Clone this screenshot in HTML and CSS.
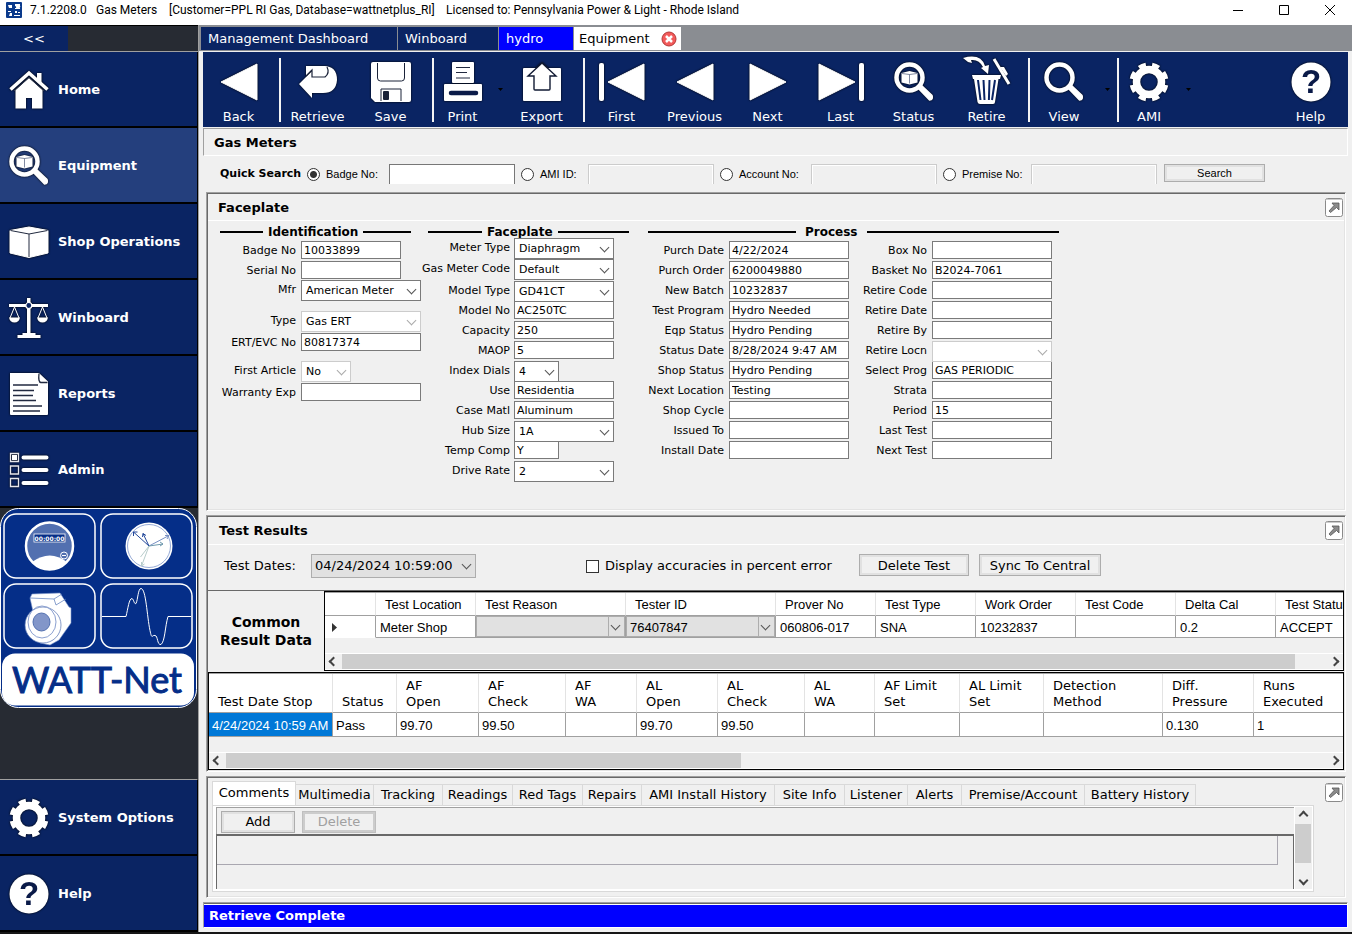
FILE: index.html
```html
<!DOCTYPE html>
<html lang="en">
<head>
<meta charset="utf-8">
<title>Gas Meters</title>
<link rel="stylesheet" href="styles.css">
</head>
<body>
<svg class="defs" aria-hidden="true">
  <symbol id="i-search" viewBox="0 0 40 40"><circle cx="15.500" cy="15.500" r="13" fill="none" stroke="#fff" stroke-width="4.500"/><path d="M24 26l3-3 11 10.500q1.500 4-2.500 4.500z" fill="#fff" stroke="#fff" stroke-width="1.500"/></symbol>
  <symbol id="i-box-search" viewBox="0 0 40 40"><use href="#i-search"/><path d="M7.500 11l8-2 8 2v9.500l-8 2-8-2z" fill="#fff"/><path d="M8 11.500l7.500 1 7.500-1M15.500 12.500v9" fill="none" stroke="#4a5878" stroke-width=".7"/></symbol>
  <symbol id="i-gear" viewBox="0 0 40 40"><circle cx="20" cy="20" r="12.500" fill="none" stroke="#fff" stroke-width="7.500"/><circle cx="20" cy="20" r="17" fill="none" stroke="#fff" stroke-width="5" pathLength="80" stroke-dasharray="5.400 4.600" transform="rotate(10.300 20 20)"/></symbol>
  <symbol id="i-help" viewBox="0 0 40 40"><circle cx="20" cy="20" r="19.500" fill="#fff"/><text x="20" y="31" text-anchor="middle" class="qmark">?</text></symbol>
  <symbol id="i-expand" viewBox="0 0 18 19"><rect x=".5" y=".5" width="17" height="18" rx="2" fill="#fff" stroke="#8a8a8a"/><path d="M1.500 1.500h15" stroke="#ccc"/><path d="M7 5h7v7l-2.500-2.500-6 5-1.500-1.500 5-5.500z" fill="#8b8b8b" stroke="#555" stroke-width=".8"/></symbol>
  <symbol id="i-tri-l" viewBox="0 0 40 40"><path d="M2 20L38 2v36z" fill="#fff" stroke="#fff" stroke-linejoin="round"/></symbol>
  <symbol id="i-tri-r" viewBox="0 0 40 40"><path d="M38 20L2 2v36z" fill="#fff" stroke="#fff" stroke-linejoin="round"/></symbol>
</svg>

<header class="titlebar">
  <svg class="app-icon" viewBox="0 0 16 16"><rect width="16" height="16" rx="1" fill="#0a3a8c"/><path d="M2 3h4v3H3zM9 2h5v2H9zM9 6h5v1H9zM2 9h3v1H2zM4 11h2v3H3zM9 9h2v2H9zM12 10h2v1h-2zM8 13h6v1H8z" fill="#fff"/><circle cx="12" cy="4.500" r="2.200" fill="#fff"/></svg>
  <span class="t1">7.1.2208.0</span><span class="t2">Gas Meters</span><span class="t3">[Customer=PPL RI Gas, Database=wattnetplus_RI]</span><span>Licensed to: Pennsylvania Power &amp; Light - Rhode Island</span>
  <div class="win-controls">
    <button aria-label="Minimize"><svg viewBox="0 0 12 12"><path d="M1 6.500h10" /></svg></button>
    <button aria-label="Maximize"><svg viewBox="0 0 12 12"><path d="M1.500 1.500h9v9h-9z"/></svg></button>
    <button aria-label="Close"><svg viewBox="0 0 12 12"><path d="M1 1l10 10M11 1L1 11"/></svg></button>
  </div>
</header>

<div class="app">
<aside class="sidebar">
  <div class="collapse-row"><button class="collapse">&lt;&lt;</button></div>
  <nav>
    <a href="#"><svg viewBox="0 0 40 40"><path d="M20 8l13.500 12v18.500H23V28h-6v10.500H6.500V20z" fill="#fff"/><path d="M1.500 19.500L20 3l18.500 16.500" fill="none" stroke="#fff" stroke-width="3.500"/><path d="M28 3h4.500v10L28 9z" fill="#fff"/><path d="M5 21L20 7.500 35 21" fill="none" stroke="#333b50" stroke-width="1"/></svg>Home</a>
    <a href="#" class="current"><svg><use href="#i-box-search"/></svg>Equipment</a>
    <a href="#"><svg viewBox="0 0 40 40"><path d="M1 8.500L20 5l19 3.500V31l-19 4.500L1 31z" fill="#fff" stroke="#fff" stroke-linejoin="round"/><path d="M1.500 8.500L20 12l18.500-3.500M20 12v23" fill="none" stroke="#222b40"/></svg>Shop Operations</a>
    <a href="#"><svg viewBox="0 0 40 42"><path d="M18 1h3.500v35h5v2h5v3h-23v-3h5v-2h4.500zM0 7h39v3H0z" fill="#fff"/><circle cx="19.800" cy="8.500" r="3" fill="#0a2463" stroke="#fff" stroke-width="1.200"/><path d="M5.500 10L1 21m4.500-11L10 21M33.500 10L29 21m4.500-11L38 21" stroke="#fff" fill="none"/><path d="M0 20.500h11q-1 5-5.500 5T0 20.500zM28 20.500h11q-1 5-5.500 5t-5.500-5z" fill="#fff"/></svg>Winboard</a>
    <a href="#"><svg viewBox="0 0 40 42"><path d="M1 0h29l9 8.500V41q0 1-1 1H2q-1 0-1-1z" fill="#fff"/><path d="M30 .5q-1 9 2 9h6.500M4 12h25M4 17.500h21M4 22.500h20M4 27.500h23M4 33h29M4 38h27" fill="none" stroke="#222a40" stroke-width="1.300"/></svg>Reports</a>
    <a href="#"><svg viewBox="0 0 40 40"><g fill="none" stroke="#e8e8ec" stroke-width="1.300"><path d="M1.500 3.500h8v8h-8zM1.500 16h8v8h-8zM1.500 28.500h8v8h-8z"/></g><path d="M3 5h5v5H3z" fill="#fff"/><path d="M14.500 7.500h23M14.500 20h23M14.500 33h23" stroke="#fff" stroke-width="4" stroke-linecap="round"/></svg>Admin</a>
  </nav>
  <svg class="logo" viewBox="0 0 197 200" role="img" aria-label="WATT-Net">
    <rect x=".5" y=".5" width="196" height="199" rx="18" fill="#052e88" stroke="#fff"/>
    <g fill="none" stroke="#fff" stroke-width="1.500"><rect x="4" y="6" width="91" height="64" rx="12"/><rect x="101" y="6" width="91" height="64" rx="12"/><rect x="4" y="76" width="91" height="64" rx="12"/><rect x="101" y="76" width="91" height="64" rx="12"/></g>
    <circle cx="49.500" cy="38" r="23.500" fill="#5270b0" stroke="#fff" stroke-width="2.500"/><path d="M32 54q18-13 35 0-17 15-35 0z" fill="#fff"/><rect x="34" y="26" width="31" height="8" fill="#052e88" stroke="#fff" stroke-width=".8"/><text x="49.500" y="32.500" text-anchor="middle" class="odo">00:00:00</text><circle cx="64" cy="47.500" r="3.500" fill="#5270b0" stroke="#fff"/><path d="M62 47.500h4" stroke="#fff"/>
    <circle cx="149" cy="38" r="23.500" fill="#fff"/><circle cx="149" cy="38" r="21.500" fill="none" stroke="#7c95cb" stroke-width=".8"/><g fill="none" stroke="#24499b" stroke-width="1"><path d="M149 38l-15.500-14m0 4v-4h4M149 38l-6-12.500m-.5 3.500l.5-3.500 3 2"/><path stroke="#7790c4" d="M149 38l20-10.500m-4 0h4l-2 3.500"/><path stroke="#6f99ae" d="M149 38l14-2m-3-2l3 2-3 2"/><path stroke="#b7cccb" d="M149 38l-7.500 20m0-4v4l3-2M149 38l-8.500 11"/></g>
    <path d="M30 90l2-4 28-1 9 14 2 1v15l-12 17-9 5-10-2z" fill="#fff" stroke="#7c95cb" stroke-width=".6"/><path d="M30 90l24 1 8-5M54 91l2 6 10-6" stroke="#5878b9" stroke-width=".7" fill="none"/><circle cx="43" cy="117" r="18" fill="#fff" stroke="#5270b0" stroke-width=".7"/><ellipse cx="42" cy="114" rx="14" ry="16" fill="none" stroke="#8ba0d0"/><ellipse cx="41.500" cy="114" rx="8.500" ry="9" fill="#8296c9" stroke="#5270b0"/>
    <path d="M102 108.500h24c2-8 3-18 6-18 2 1 2 6 4 5 2-4 2-15 5-15 5 0 6 28 9 42 2 10 2 4 5 5 3 0 2 10 6 9 4-3 4-18 7-28h23" fill="none" stroke="#fff" stroke-width="1"/>
    <rect x="2" y="145.500" width="192" height="52" rx="13" fill="#fff"/>
    <text x="97" y="185" text-anchor="middle" class="brand">WATT-Net</text>
  </svg>
  <nav class="nav-bottom">
    <a href="#"><svg><use href="#i-gear"/></svg>System Options</a>
    <a href="#"><svg><use href="#i-help"/></svg>Help</a>
  </nav>
</aside>

<main>
  <div class="doc-tabs">
    <button class="w-mgmt">Management Dashboard</button><button class="w-win">Winboard</button><button class="w-hydro hydro">hydro</button>
    <button class="w-equip active">Equipment<svg viewBox="0 0 16 16"><circle cx="8" cy="8" r="7" fill="#f25a5a" stroke="#b33838"/><path d="M5 5l6 6M11 5l-6 6" stroke="#fff" stroke-width="2.500"/></svg></button>
  </div>

  <div class="toolbar">
    <button class="tool w-back"><svg><use href="#i-tri-l"/></svg>Back</button><i class="sep"></i>
    <button class="tool"><svg viewBox="0 0 40 40"><path d="M1 22L14 9v6h13q3-2 1-6l-4-5q15-1 15 14-1 13-14 13H14v5z" fill="#fff"/><path d="M8 14V4h19q6 5 2 10-1 1-3 1H14V8z" fill="#fff"/><path d="M8 14l6-6v7h13q5-4 2-10" fill="none" stroke="#1a2238" stroke-width="1.200"/></svg>Retrieve</button>
    <button class="tool"><svg viewBox="0 0 40 40"><path d="M2 0h36q2 0 2 2v36q0 2-2 2H4l-4-4V2q0-2 2-2z" fill="#fff"/><path d="M6.500 1v15q0 3 3 3h21q3 0 3-3V1M10 39V27h20v12M12.500 29.500h5v8h-5z" fill="none" stroke="#1a2238"/><path d="M13 30h4v7h-4z" fill="#1a2238"/></svg>Save</button><i class="sep"></i>
    <button class="tool w-print"><svg viewBox="0 0 40 40"><rect x="9" width="22" height="21" rx="1" fill="#fff"/><path d="M13 5.500h14M13 10.500h11M13 16h14" stroke="#222a40"/><rect x="1" y="22" width="38" height="17" rx="1" fill="#fff"/><path d="M8 31h25" stroke="#0a1a48" stroke-width="4.500" stroke-linecap="round"/></svg>Print</button><button class="drop" aria-label="Print options"><svg viewBox="0 0 5 3"><path d="M0 0h5L2.500 3z"/></svg></button>
    <button class="tool"><svg viewBox="0 0 40 40"><rect x="1" y="6" width="38" height="33" rx="1" fill="#fff"/><path d="M20 1l14 13h-6v13q0 1-1 1H13q-1 0-1-1V14H6z" fill="#fff" stroke="#111a33" stroke-width="1.400"/></svg>Export</button><i class="sep"></i>
    <button class="tool"><svg class="wide" viewBox="0 0 46 40"><rect width="5" height="38" y="1" rx="2" fill="#fff"/><path d="M9 20L45 2v36z" fill="#fff" stroke="#fff"/></svg>First</button>
    <button class="tool"><svg><use href="#i-tri-l"/></svg>Previous</button>
    <button class="tool"><svg><use href="#i-tri-r"/></svg>Next</button>
    <button class="tool"><svg class="wide" viewBox="0 0 46 40"><rect x="41" width="5" height="38" y="1" rx="2" fill="#fff"/><path d="M37 20L1 2v36z" fill="#fff" stroke="#fff"/></svg>Last</button>
    <button class="tool"><svg><use href="#i-box-search"/></svg>Status</button>
    <button class="tool"><svg class="tall" viewBox="0 0 50 50"><path d="M1 3q18-5 22 8l4-1-1 9-7-6 2-1Q17 4 9 5l1 3-4-1z" fill="#fff"/><path d="M32 4l15 25" stroke="#fff" stroke-width="3"/><path d="M38 12l4 0 4 7-2 2z" fill="#fff"/><path d="M10 20h29l-1 4h-1.500L33 47q0 2-2 2H18q-2 0-2.500-2L12 24h-1z" fill="#fff"/><path d="M16 25l2.500 20M21.500 25l1 20M27.500 25l-.6 20M33 25L30 45" stroke="#0a2463" stroke-width="2"/></svg>Retire</button><i class="sep"></i>
    <button class="tool w-view"><svg><use href="#i-search"/></svg>View</button><button class="drop" aria-label="View options"><svg viewBox="0 0 5 3"><path d="M0 0h5L2.500 3z"/></svg></button><i class="sep"></i>
    <button class="tool w-ami"><svg><use href="#i-gear"/></svg>AMI</button><button class="drop" aria-label="AMI options"><svg viewBox="0 0 5 3"><path d="M0 0h5L2.500 3z"/></svg></button>
    <button class="tool help"><svg><use href="#i-help"/></svg>Help</button>
  </div>

  <h1 class="page-head">Gas Meters</h1>

  <form class="quick">
    <strong>Quick Search</strong>
    <label><input type="radio" name="by" checked>Badge No:</label><input type="text" aria-label="Badge No" class="on">
    <label><input type="radio" name="by">AMI ID:</label><input type="text" aria-label="AMI ID" disabled>
    <label><input type="radio" name="by">Account No:</label><input type="text" aria-label="Account No" disabled>
    <label><input type="radio" name="by">Premise No:</label><input type="text" aria-label="Premise No" disabled>
    <button type="button" class="btn">Search</button>
  </form>

  <section class="panel faceplate">
    <div class="panel-head"><h2>Faceplate</h2><button class="expand" aria-label="Expand"><svg><use href="#i-expand"/></svg></button></div>
    <div class="groups">
      <div class="group g-id">
        <h3>Identification</h3>
        <div class="fields rows-id">
          <label for="a1">Badge No</label><input id="a1" class="short" value="10033899">
          <label for="a2">Serial No</label><input id="a2" class="short">
          <label for="a3">Mfr</label><span class="combo"><select id="a3"><option>American Meter</option></select></span>
          <label for="a4">Type</label><span class="combo off"><select id="a4" disabled><option>Gas ERT</option></select></span>
          <label for="a5">ERT/EVC No</label><input id="a5" value="80817374">
          <label for="a6">First Article</label><span class="combo off w50"><select id="a6" disabled><option>No</option></select></span>
          <label for="a7">Warranty Exp</label><input id="a7">
        </div>
      </div>
      <div class="group g-face">
        <h3>Faceplate</h3>
        <div class="fields rows-face">
          <label for="b1">Meter Type</label><span class="combo"><select id="b1"><option>Diaphragm</option></select></span>
          <label for="b2">Gas Meter Code</label><span class="combo"><select id="b2"><option>Default</option></select></span>
          <label for="b3">Model Type</label><span class="combo"><select id="b3"><option>GD41CT</option></select></span>
          <label for="b4">Model No</label><input id="b4" value="AC250TC">
          <label for="b5">Capacity</label><input id="b5" value="250">
          <label for="b6">MAOP</label><input id="b6" value="5">
          <label for="b7">Index Dials</label><span class="combo w45"><select id="b7"><option>4</option></select></span>
          <label for="b8">Use</label><input id="b8" value="Residentia">
          <label for="b9">Case Matl</label><input id="b9" value="Aluminum">
          <label for="b10">Hub Size</label><span class="combo"><select id="b10"><option>1A</option></select></span>
          <label for="b11">Temp Comp</label><input id="b11" class="w45" value="Y">
          <label for="b12">Drive Rate</label><span class="combo"><select id="b12"><option>2</option></select></span>
        </div>
      </div>
      <div class="group g-proc">
        <h3>Process</h3>
        <div class="fields rows-proc">
          <label for="c1">Purch Date</label><input id="c1" value="4/22/2024"><label for="d1">Box No</label><input id="d1">
          <label for="c2">Purch Order</label><input id="c2" value="6200049880"><label for="d2">Basket No</label><input id="d2" value="B2024-7061">
          <label for="c3">New Batch</label><input id="c3" value="10232837"><label for="d3">Retire Code</label><input id="d3">
          <label for="c4">Test Program</label><input id="c4" value="Hydro Needed"><label for="d4">Retire Date</label><input id="d4">
          <label for="c5">Eqp Status</label><input id="c5" value="Hydro Pending"><label for="d5">Retire By</label><input id="d5">
          <label for="c6">Status Date</label><input id="c6" value="8/28/2024 9:47 AM"><label for="d6">Retire Locn</label><span class="combo off"><select id="d6" disabled><option></option></select></span>
          <label for="c7">Shop Status</label><input id="c7" value="Hydro Pending"><label for="d7">Select Prog</label><input id="d7" value="GAS PERIODIC">
          <label for="c8">Next Location</label><input id="c8" value="Testing"><label for="d8">Strata</label><input id="d8">
          <label for="c9">Shop Cycle</label><input id="c9"><label for="d9">Period</label><input id="d9" value="15">
          <label for="c10">Issued To</label><input id="c10"><label for="d10">Last Test</label><input id="d10">
          <label for="c11">Install Date</label><input id="c11"><label for="d11">Next Test</label><input id="d11">
        </div>
      </div>
    </div>
  </section>

  <section class="panel results">
    <div class="panel-head"><h2>Test Results</h2><button class="expand" aria-label="Expand"><svg><use href="#i-expand"/></svg></button></div>
    <div class="controls">
      <label for="dates">Test Dates:</label><span class="combo grey"><select id="dates"><option>04/24/2024 10:59:00</option></select></span>
      <label class="pct"><input type="checkbox">Display accuracies in percent error</label>
      <button class="btn w-del">Delete Test</button><button class="btn w-sync">Sync To Central</button>
    </div>
    <div class="common">
      <h3>Common<br>Result Data</h3>
      <div class="grid-box">
        <table class="t-common">
          <colgroup><col class="c50"><col class="c100"><col class="c150"><col class="c150"><col class="c100"><col class="c100"><col class="c100"><col class="c100"><col class="c100"><col class="c100"></colgroup>
          <thead><tr><th></th><th>Test Location</th><th>Test Reason</th><th>Tester ID</th><th>Prover No</th><th>Test Type</th><th>Work Order</th><th>Test Code</th><th>Delta Cal</th><th>Test Status</th></tr></thead>
          <tbody><tr><td class="marker"><svg viewBox="0 0 5 9"><path d="M0 0l5 4.500L0 9z" fill="#333"/></svg></td><td>Meter Shop</td><td class="pick"><span class="combo cell"><select aria-label="Test Reason"><option></option></select></span></td><td class="pick"><span class="combo cell"><select aria-label="Tester ID"><option>76407847</option></select></span></td><td>060806-017</td><td>SNA</td><td>10232837</td><td></td><td>0.2</td><td>ACCEPT</td></tr></tbody>
        </table>
        <div class="scroll"><b class="arr l"></b><i class="thumb long"></i><b class="arr r"></b></div>
      </div>
    </div>
    <div class="grid-box">
      <table class="t-runs">
        <colgroup><col class="r1"><col class="r2"><col class="r3"><col class="r4"><col class="r5"><col class="r6"><col class="r4"><col class="r7"><col class="r8"><col class="r9"><col class="r10"><col class="r11"><col class="r12"></colgroup>
        <thead><tr><th>Test Date Stop</th><th>Status</th><th>AF<br>Open</th><th>AF<br>Check</th><th>AF<br>WA</th><th>AL<br>Open</th><th>AL<br>Check</th><th>AL<br>WA</th><th>AF Limit<br>Set</th><th>AL Limit<br>Set</th><th>Detection<br>Method</th><th>Diff.<br>Pressure</th><th>Runs<br>Executed</th></tr></thead>
        <tbody><tr><td class="sel">4/24/2024 10:59 AM</td><td>Pass</td><td>99.70</td><td>99.50</td><td></td><td>99.70</td><td>99.50</td><td></td><td></td><td></td><td></td><td>0.130</td><td>1</td></tr></tbody>
      </table>
      <div class="scroll"><b class="arr l"></b><i class="thumb half"></i><b class="arr r"></b></div>
    </div>
  </section>

  <section class="panel notes">
    <div class="notes-main">
      <div class="tabs">
        <button class="active n1">Comments</button><button class="n2">Multimedia</button><button class="n3">Tracking</button><button class="n4">Readings</button><button class="n4">Red Tags</button><button class="n5">Repairs</button><button class="n6">AMI Install History</button><button class="n4">Site Info</button><button class="n7">Listener</button><button class="n8">Alerts</button><button class="n9">Premise/Account</button><button class="n10">Battery History</button>
      </div>
      <div class="tab-body">
        <div class="tab-inner">
          <div class="actions"><button class="btn w74">Add</button><button class="btn w74" disabled>Delete</button></div>
          <div class="comment-area"><textarea aria-label="Comment" rows="1"></textarea></div>
        </div>
        <div class="vscroll"><b class="arr u"></b><i class="thumb"></i><b class="arr d"></b></div>
      </div>
    </div>
    <button class="expand" aria-label="Expand"><svg><use href="#i-expand"/></svg></button>
  </section>

  <footer class="status">Retrieve Complete</footer>
</main>
</div>
</body>
</html>
```
FILE: styles.css
```css
* { box-sizing: border-box; }

:root {
  --navy: #0a2463;
  --face: #f0f0f0;
  --line: #a0a0a0;
  --dark: #696969;
  --ui: "DejaVu Sans", Verdana, sans-serif;
  --grid: "Liberation Sans", Arial, sans-serif;
}

body {
  margin: 0;
  min-height: 100vh;
  display: flex;
  flex-direction: column;
  background: var(--face);
  color: #000;
  font: 13px/16px var(--ui);
  overflow: hidden;
}

h1, h2, h3 { margin: 0; font-size: 13px; line-height: 16px; }
button, input, select, textarea { font: inherit; color: inherit; margin: 0; border-radius: 0; }
button { padding: 0; border: 0; background: none; white-space: nowrap; }
svg { display: block; }
.defs { display: none; }
.qmark { font: bold 33px var(--grid); fill: #0a1a48; }

/* Title bar */
.titlebar {
  display: flex;
  align-items: center;
  height: 25px;
  padding: 0 8px 5px 6px;
  background: #fff;
  font: 12px/20px Roboto, "Open Sans", sans-serif;
  white-space: nowrap;
}
.app-icon { width: 16px; height: 16px; margin-right: 8px; }
.t1 { width: 66px; }
.t2 { width: 73px; }
.t3 { width: 277px; }
.win-controls { display: flex; gap: 18px; margin-left: auto; }
.win-controls button { width: 28px; display: grid; place-items: center; }
.win-controls svg { width: 12px; height: 12px; fill: none; stroke: #000; }

.app { flex: 1; display: flex; border-bottom: 2px solid #161616; }

/* Sidebar */
.sidebar {
  flex: none;
  width: 199px;
  display: flex;
  flex-direction: column;
  background: #272b33;
  border-right: 1px solid var(--line);
}
.collapse-row { height: 27px; border-top: 1px solid #000; border-bottom: 1px solid var(--line); }
.collapse { width: 68px; height: 25px; background: var(--navy); color: #fff; }
.sidebar nav { background: var(--navy); border-right: 1px solid #000; }
.sidebar nav a {
  display: flex;
  align-items: center;
  gap: 9px;
  height: 76px;
  padding: 1px 0 0 9px;
  border-bottom: 2px solid #000;
  color: #fff;
  font-weight: bold;
  text-decoration: none;
}
.sidebar nav a.current { background: #243f7d; }
.sidebar nav svg { width: 40px; height: 42px; filter: drop-shadow(0 0 1px #000); }
.sidebar .nav-bottom { margin-top: auto; border-top: 1px solid var(--line); }
.logo { width: 197px; height: 200px; }
.odo { font: bold 6px var(--ui); fill: #fff; }
.brand { font: 36px Lato, sans-serif; fill: #052e88; stroke: #052e88; stroke-width: 1px; }

/* Main column */
main { flex: 1; min-width: 0; display: flex; flex-direction: column; }
.doc-tabs { display: flex; gap: 1px; height: 26px; padding: 2px 0 1px 2px; background: #8a8d92; }
.doc-tabs button { padding-left: 7px; background: var(--navy); color: #fff; text-align: left; }
.doc-tabs .hydro { background: #00f; }
.doc-tabs .active { display: flex; align-items: center; gap: 11px; padding-left: 5px; background: #fff; color: #000; }
.doc-tabs svg { width: 16px; height: 16px; }
.w-mgmt { width: 196px; }
.w-win { width: 100px; }
.w-hydro { width: 74px; }
.w-equip { width: 107px; }

.toolbar {
  display: flex;
  height: 75px;
  margin: 1px 4px 1px 4px;
  background: var(--navy);
  color: #fff;
}
.tool {
  width: 73px;
  flex: none;
  display: flex;
  flex-direction: column;
  align-items: center;
  justify-content: flex-end;
  gap: 7px;
  padding-bottom: 2px;
}
.tool svg { width: 40px; height: 40px; filter: drop-shadow(0 0 1px #000); }
.tool svg.wide { width: 46px; }
.tool svg.tall { width: 50px; height: 50px; margin-bottom: -3px; }
.tool.help { margin-left: auto; margin-right: 1px; }
.w-back { width: 71px; }
.w-print { width: 57px; }
.w-view { width: 68px; }
.w-ami { width: 60px; }
.sep { width: 2px; margin: 6px 0 5px 5px; background: #f4f4f4; }
.drop { width: 14px; padding-left: 4px; display: grid; place-items: center; }
.drop svg { width: 5px; height: 3px; }

.page-head {
  margin: 0 4px;
  padding: 6px 10px 4px;
  height: 28px;
  border: solid;
  border-width: 1px;
  border-color: var(--line) #fff #fff var(--line);
}

.quick {
  display: grid;
  grid-template-columns: 87px 82px 132px 67px 132px 91px 132px 88px 133px 101px;
  height: 36px;
  padding: 8px 0 8px 21px;
  font: 11px/20px var(--grid);
}
.quick strong { font: bold 11px/20px var(--ui); }
.quick label { display: flex; align-items: center; gap: 6px; }
.quick input[type=text] { width: 126px; height: 20px; border: 1px solid #ccc; border-bottom: 0; background: var(--face); box-shadow: inset 1px 1px #fff, inset -1px 0 #fff; }
.quick input[type=text].on { border-color: #777; background: #fff; }
input[type=radio] {
  appearance: none;
  width: 13px;
  height: 13px;
  border: 1px solid #333;
  border-radius: 50%;
  background: #fff;
}
input[type=radio]:checked { background: radial-gradient(circle, #333 3px, #fff 4px); }
input[type=checkbox] { appearance: none; width: 13px; height: 13px; border: 1px solid #333; background: #fff; }

.btn { height: 22px; border: 1px solid #adadad; background: var(--face); box-shadow: inset 0 0 0 2px #e1e1e1; }
.btn:disabled { color: #a0a0a0; border-color: #bfbfbf; box-shadow: inset 0 0 0 2px #ccc; }
.quick .btn { height: 18px; line-height: 16px; }

/* Sunken panels */
.panel {
  margin: 0 6px 4px 7px;
  padding: 1px;
  border: 1px solid;
  border-color: var(--line) #fff #fff var(--line);
  box-shadow: inset 1px 1px var(--dark), inset -1px -1px #e3e3e3;
}
.panel-head { display: flex; justify-content: space-between; height: 27px; padding-left: 10px; border-bottom: 1px solid #fff; }
.panel-head h2 { padding-top: 6px; }
.results .panel-head { height: 28px; padding-left: 11px; }
.expand { flex: none; width: 19px; height: 19px; margin: 4px 0 0; }
.expand svg { width: 18px; height: 19px; }

.groups { display: grid; grid-template-columns: 200px 230px 411px; padding: 3px 0 28px 10px; font-size: 11px; }
.group h3 { display: flex; align-items: center; gap: 5px; height: 16px; font-size: 12px; margin-bottom: 1px; }
.group h3::before, .group h3::after { content: ""; height: 2px; background: #000; }
.group h3::after { flex: 1; }
.g-id h3 { width: 193px; padding-left: 2px; }
.g-id h3::before { width: 43px; }
.g-face h3 { width: 211px; padding-left: 10px; margin-bottom: -2px; }
.g-face h3::before { width: 54px; }
.g-proc h3 { gap: 9px; }
.g-proc h3::before { width: 148px; }

.fields { display: grid; align-items: start; }
.fields label { text-align: right; line-height: 20px; white-space: nowrap; justify-self: end; }
.rows-id { grid-template-columns: 78px 120px; column-gap: 5px; grid-template-rows: 20px 19px 31px 22px 28px 22px 18px; }
.rows-face { grid-template-columns: 92px 100px; column-gap: 4px; grid-template-rows: 21px 22px; grid-auto-rows: 20px; }
.rows-proc { grid-template-columns: 76px 120px 73px 120px; column-gap: 5px; grid-auto-rows: 20px; }
.fields input { width: 100%; height: 18px; padding: 0 2px; border: 1px solid #7a7a7a; background: #fff; }
.fields .short { width: 100px; }
.fields .w45 { width: 45px; }
.fields .w50 { width: 50px; }

.combo { position: relative; display: block; width: 100%; height: 21px; border: 1px solid #7a7a7a; background: #fff; }
.combo select { appearance: none; width: 100%; height: 100%; padding: 0 0 0 4px; border: 0; background: none; opacity: 1; color: #000; }
.combo::after {
  content: "";
  position: absolute;
  right: 5px;
  top: calc(50% - 5px);
  width: 6px;
  height: 6px;
  border: solid #555;
  border-width: 0 1px 1px 0;
  transform: rotate(45deg);
  pointer-events: none;
}
.combo.off { border-color: #ccc; }
.combo.off::after { border-color: #aaa; }

/* Test results */
.controls { display: flex; align-items: start; height: 45px; padding: 9px 0 0 16px; line-height: 22px; }
.controls > label { line-height: 24px; }
.controls > label:first-child { width: 87px; }
.combo.grey { width: 165px; height: 24px; margin-right: 110px; border-color: #adadad; background: #e1e1e1; }
.combo.grey select { padding-left: 3px; }
.pct { display: flex; align-items: center; gap: 6px; width: 273px; white-space: nowrap; }
.w-del { width: 110px; margin-right: 10px; }
.w-sync { width: 122px; }

.common { display: grid; grid-template-columns: 116px minmax(0, 1fr); border-top: 1px solid var(--dark); margin-bottom: 1px; }
.common h3 { align-self: center; text-align: center; font-size: 14px; line-height: 18px; }
.grid-box { min-width: 0; overflow: hidden; border: 1px solid #000; box-shadow: inset 0 1px var(--line); padding-top: 1px; }
table { table-layout: fixed; border-collapse: separate; border-spacing: 0; background: #fff; font-family: var(--grid); }
th { padding: 2px 0 0 9px; border-right: 1px solid #e3e3e3; border-bottom: 1px solid var(--line); font-weight: normal; text-align: left; white-space: nowrap; }
td { padding: 2px 0 0 4px; border-right: 1px solid var(--line); border-bottom: 1px solid var(--line); white-space: nowrap; }
.t-common { width: 1051px; }
.t-common th { height: 23px; }
.t-common td { height: 22px; }
.t-common td.pick { padding: 0; }
.t-common td.marker { padding-left: 7px; border-color: var(--line) #a0a0a0 #fff; }
.marker svg { width: 5px; height: 9px; }
.combo.cell { height: 21px; border-color: #adadad; background: #e1e1e1; }
.combo.cell select { padding: 2px 0 0 3px; }
.combo.cell::before { content: ""; position: absolute; right: 15px; top: 0; bottom: 0; border-left: 1px solid #adadad; }
.c50 { width: 51px; }
.c100 { width: 100px; }
.c150 { width: 150px; }
.t-runs { width: 1143px; }
.t-runs th { height: 39px; padding-bottom: 2px; font-family: var(--ui); vertical-align: bottom; }
.t-runs td { height: 24px; padding-left: 3px; }
.t-runs .sel { background: #0078d7; color: #fff; }
.r1 { width: 124px; }
.r2 { width: 64px; }
.r3 { width: 82px; }
.r4 { width: 87px; }
.r5 { width: 71px; }
.r6 { width: 81px; }
.r7 { width: 70px; }
.r8 { width: 85px; }
.r9 { width: 84px; }
.r10 { width: 119px; }
.r11 { width: 91px; }
.r12 { width: 98px; }

/* Scroll bars */
.scroll { display: flex; height: 17px; margin-top: 15px; border-top: 1px solid #fff; border-bottom: 1px solid #fff; }
.arr { flex: none; width: 17px; display: grid; place-items: center; }
.arr::before { content: ""; width: 5px; height: 5px; border: solid #444; border-width: 2px 0 0 2px; transform: rotate(-45deg); }
.arr.r { margin-left: auto; }
.arr.r::before { transform: rotate(135deg); }
.arr.u::before { transform: rotate(45deg); }
.arr.d::before { transform: rotate(225deg); }
.thumb { background: #cdcdcd; }
.thumb.long { width: 953px; flex: 0 1 auto; }
.thumb.half { width: 515px; flex: 0 1 auto; }

/* Notes */
.notes { display: flex; justify-content: space-between; padding: 4px 1px 5px 5px; margin-bottom: 4px; }
.notes .expand { margin-top: 2px; }
.notes-main { flex: 1; min-width: 0; margin-right: 11px; }
.tabs { display: flex; align-items: flex-end; }
.tabs button { height: 21px; border: 1px solid #d9d9d9; border-left-width: 0; border-bottom: 0; text-align: center; }
.tabs .active { height: 24px; padding-bottom: 2px; border-left-width: 1px; background: #fff; }
.n1 { width: 84px; }
.n2 { width: 78px; }
.n3 { width: 69px; }
.n4 { width: 70px; }
.n5 { width: 59px; }
.n6 { width: 133px; }
.n7 { width: 63px; }
.n8 { width: 54px; }
.n9 { width: 123px; }
.n10 { width: 111px; }
.tab-body { display: flex; gap: 1px; padding: 1px 1px 2px 3px; border: 1px solid #d9d9d9; background: #fff; }
.tab-inner { flex: 1; background: var(--face); }
.actions { display: flex; gap: 7px; height: 27px; padding: 3px 4px; border-top: 1px solid var(--line); border-left: 1px solid var(--line); }
.w74 { width: 74px; }
.comment-area { height: 55px; border: 1px solid var(--dark); border-bottom: 0; border-top-width: 2px; padding-right: 15px; }
.comment-area textarea { display: block; width: 100%; height: 29px; border: 1px solid #a9a7b0; border-width: 0 1px 1px 0; background: var(--face); resize: none; }
.vscroll { width: 17px; display: flex; flex-direction: column; background: var(--face); }
.vscroll .arr { height: 17px; }
.vscroll .thumb { flex: none; height: 39px; margin-right: 1px; }
.vscroll .arr.d { margin-top: auto; }

.status {
  margin: 0 4px 0 4px;
  height: 26px;
  padding: 3px 5px;
  border: 1px solid;
  border-color: var(--line) #fff #fff var(--line);
  box-shadow: inset 0 1px var(--dark), inset 0 2px #fff;
  background: #00f;
  color: #fff;
  font-weight: bold;
  line-height: 20px;
}
```
